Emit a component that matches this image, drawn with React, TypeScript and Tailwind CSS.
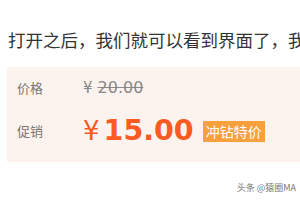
export default function App() {
  return (
    <div className="relative w-[300px] h-[200px] overflow-hidden bg-white" style={{ fontFamily: '"Noto Sans CJK SC", "DejaVu Sans", sans-serif' }}>
      <div className="pt-[27px] pl-[8px] whitespace-nowrap text-[17.5px] leading-[26px] text-[#333]">
        打开之后，我们就可以看到界面了，我们
      </div>
      <div className="mt-[14px] ml-[7px] h-[95px] bg-[#fdf3ee] pl-[10px] pt-[9px]">
        <div className="flex items-center h-[24px]">
          <span className="w-[66px] text-[13px] text-[#777]">价格</span>
          <span className="flex items-center text-[#888]">
            <span className="text-[15px]" style={{ fontFamily: '"DejaVu Sans", sans-serif' }}>¥</span>
            <span className="ml-[5px] text-[16px] line-through" style={{ fontFamily: '"DejaVu Sans", sans-serif' }}>20.00</span>
          </span>
        </div>
        <div className="mt-[15px] flex items-center h-[32px]">
          <span className="w-[66px] text-[13px] text-[#777]">促销</span>
          <span className="flex items-center text-[#fb5a23]" style={{ fontFamily: '"DejaVu Sans", sans-serif' }}>
            <span className="text-[26px]">¥</span>
            <span className="ml-[4px] text-[28.5px] font-bold">15.00</span>
          </span>
          <span className="ml-[9px] h-[21px] px-[3px] bg-[#f8a03c] text-white text-[14px] leading-[21px]">冲钻特价</span>
        </div>
      </div>
      <div className="absolute right-[4px] top-[181px] text-[9px] text-[#777]">头条 @猿圈MA</div>
    </div>
  );
}
